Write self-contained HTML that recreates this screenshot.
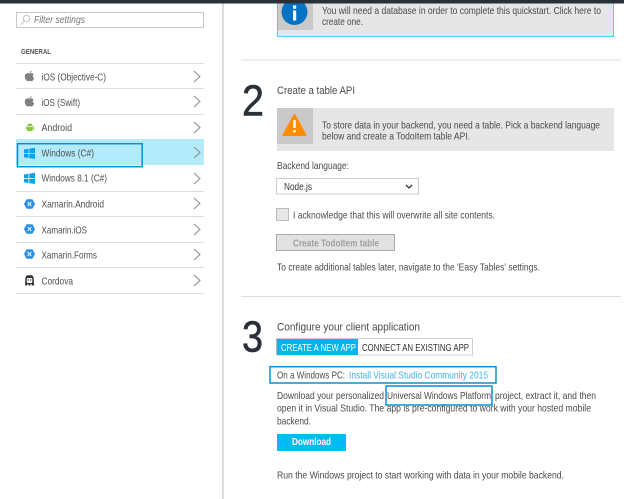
<!DOCTYPE html>
<html><head><meta charset="utf-8"><style>
html,body{margin:0;padding:0;background:#fff;width:624px;height:499px;overflow:hidden}
svg{display:block}
text{font-family:"Liberation Sans",sans-serif;font-size:10.5px;fill:#4a4a4a;filter:blur(.3px)}
.r{font-size:10.5px;fill:#4f4f4f}
</style></head><body>
<svg width="624" height="499" viewBox="0 0 624 499" xmlns="http://www.w3.org/2000/svg">
<rect x="222" y="0" width="2" height="499" fill="#dcdcdc"/>
<!-- filter -->
<rect x="16.5" y="12.500" width="187" height="15" fill="#fff" stroke="#c8c8c8"/>
<circle cx="26.500" cy="18.500" r="3.200" fill="none" stroke="#c4c4c4"/><path d="M24.300 21L21 24.500" stroke="#c4c4c4"/>
<text x="34" y="23" textLength="51" lengthAdjust="spacingAndGlyphs" font-style="italic" style="fill:#777">Filter settings</text>
<text x="21" y="54" textLength="30" lengthAdjust="spacingAndGlyphs" font-weight="bold" style="font-size:7.500px;fill:#555">GENERAL</text>
<!-- rows -->
<rect x="16" y="139" width="188" height="26" fill="#b4ebfa"/>
<g stroke="#dedede" stroke-width="1">
<path d="M16 63.500H204M16 88.500H204M16 114.500H204M16 191.500H204M16 216.500H204M16 242.500H204M16 293.500H204"/>
<path d="M16 267.500H204"/>
</g>
<g fill="none" stroke="#8a8a8a" stroke-width="1">
<path d="M194 71l6 5.500-6 5.500M194 96l6 5.500-6 5.500M194 122l6 5.500-6 5.500M194 147l6 5.500-6 5.500M194 173l6 5.500-6 5.500M194 198l6 5.500-6 5.500M194 224l6 5.500-6 5.500M194 249l6 5.500-6 5.500M194 275l6 5.500-6 5.500"/>
</g>
<text class="r" x="41.500" y="80.500" textLength="64.500" lengthAdjust="spacingAndGlyphs">iOS (Objective-C)</text>
<text class="r" x="41.500" y="106" textLength="38.500" lengthAdjust="spacingAndGlyphs">iOS (Swift)</text>
<text class="r" x="41.500" y="131" textLength="30.500" lengthAdjust="spacingAndGlyphs">Android</text>
<text class="r" x="41.500" y="156.500" textLength="52.500" lengthAdjust="spacingAndGlyphs">Windows (C#)</text>
<text class="r" x="41.500" y="181.500" textLength="65.500" lengthAdjust="spacingAndGlyphs">Windows 8.1 (C#)</text>
<text class="r" x="41.500" y="207.500" textLength="62.500" lengthAdjust="spacingAndGlyphs">Xamarin.Android</text>
<text class="r" x="41.500" y="233.500" textLength="45.500" lengthAdjust="spacingAndGlyphs">Xamarin.iOS</text>
<text class="r" x="41.500" y="258.500" textLength="55.500" lengthAdjust="spacingAndGlyphs">Xamarin.Forms</text>
<text class="r" x="41.500" y="284.500" textLength="31.500" lengthAdjust="spacingAndGlyphs">Cordova</text>
<!-- apple -->
<g fill="#808080">
<path d="M29.800 73.500c1.500-.6 3-.4 4 .8-1.500 1-1.300 3 .4 3.700-.6 1.700-1.600 3.200-2.600 3.200-.8 0-1.100-.4-1.800-.4s-1 .4-1.800.4c-1.800 0-3.200-2.800-3.200-4.800 0-2.800 2.600-3.900 5-2.900zM29.600 73c0-1.200 1-2 2-2.100 0 1.200-1 2.100-2 2.100z"/>
<path d="M29.800 98.800c1.500-.6 3-.4 4 .8-1.500 1-1.300 3 .4 3.700-.6 1.700-1.600 3.200-2.600 3.200-.8 0-1.100-.4-1.800-.4s-1 .4-1.800.4c-1.800 0-3.200-2.800-3.200-4.800 0-2.800 2.600-3.900 5-2.900zM29.600 98.300c0-1.200 1-2 2-2.100 0 1.200-1 2.100-2 2.100z"/>
</g>
<!-- android -->
<g fill="#8cc63f"><path d="M27 126.300a2.900 2.900 0 0 1 5.800 0zM27 127h5.800v3.300a1 1 0 0 1-1 .8h-3.800a1 1 0 0 1-1-.8z"/><rect x="25.600" y="126.500" width="1" height="3"/><rect x="33.200" y="126.500" width="1" height="3"/></g>
<!-- windows -->
<g fill="#00a4ef">
<path d="M24 149.500l4.500-.7v4.200H24zM29.300 148.700l5.700-.9v5.200h-5.700zM24 153.800h4.500v4.200l-4.500-.7zM29.300 153.800H35v5.200l-5.700-.9z"/>
<path d="M24 174.500l4.500-.7v4.200H24zM29.300 173.700l5.700-.9v5.200h-5.700zM24 178.800h4.500v4.200l-4.500-.7zM29.300 178.800H35v5.200l-5.700-.9z"/>
</g>
<!-- xamarin -->
<g fill="#2e90e0" stroke="#2e90e0" stroke-width="1.500" stroke-linejoin="round">
<path d="M24.800 204l2.200-4h5l2.200 4-2.200 4h-5z"/>
<path d="M24.800 229l2.200-4h5l2.200 4-2.200 4h-5z"/>
<path d="M24.800 254l2.200-4h5l2.200 4-2.200 4h-5z"/>
</g>
<path d="M27.700 202l3.600 4M31.300 202l-3.600 4M27.700 227l3.600 4M31.300 227l-3.600 4M27.700 252l3.600 4M31.300 252l-3.600 4" stroke="#d8ecfb" stroke-width="1.300"/>
<!-- cordova -->
<path d="M27 275.300h5l1.600 1.700.5 8.500h-2.300l-.3-1.500h-1v1.500h-2v-1.500h-1l-.3 1.500H25l.5-8.500z" fill="#333"/>
<rect x="26.800" y="278" width="5.500" height="5" rx="1" fill="#fff"/>
<rect x="27.800" y="279.200" width="1" height="1.600" fill="#333"/><rect x="30.300" y="279.200" width="1" height="1.600" fill="#333"/>
<rect x="17.500" y="143.700" width="124.700" height="23" fill="none" stroke="#0a90d0" stroke-width="1.500"/>
<!-- info box -->
<rect x="277.500" y="3" width="336" height="33.500" fill="#e6e6e6" stroke="#4fcdf2"/>
<rect x="278" y="3" width="35" height="27" fill="#c9c9c9"/>
<circle cx="294.500" cy="12" r="13" fill="#0672c6"/>
<rect x="293" y="10.500" width="3.200" height="10" fill="#fff"/><rect x="293" y="5.500" width="3.200" height="3.200" fill="#fff"/>
<rect x="0" y="0" width="624" height="3.500" fill="#2b3036"/>
<text x="322" y="14" textLength="279" lengthAdjust="spacingAndGlyphs">You will need a database in order to complete this quickstart. Click here to</text>
<text x="322" y="25" textLength="41" lengthAdjust="spacingAndGlyphs">create one.</text>
<rect x="241" y="59" width="380" height="2" fill="#eee"/>
<!-- step 2 -->
<text x="242" y="115.500" textLength="22" lengthAdjust="spacingAndGlyphs" stroke="#2b3036" stroke-width=".6" style="font-size:44px;fill:#2b3036">2</text>
<text x="277" y="94" textLength="78" lengthAdjust="spacingAndGlyphs" style="font-size:11px">Create a table API</text>
<rect x="277" y="108" width="337" height="43" fill="#e6e6e6"/>
<rect x="277" y="108" width="36" height="36" fill="#c9c9c9"/>
<path d="M294.500 115l11 20h-22z" fill="#ff8c00" stroke="#ff8c00" stroke-width="2" stroke-linejoin="round"/>
<rect x="293.300" y="120" width="2.400" height="8" fill="#fff"/><rect x="293.300" y="130" width="2.400" height="2.500" fill="#fff"/>
<text x="322" y="128.500" textLength="278" lengthAdjust="spacingAndGlyphs">To store data in your backend, you need a table. Pick a backend language</text>
<text x="322" y="139.500" textLength="148" lengthAdjust="spacingAndGlyphs">below and create a TodoItem table API.</text>
<text x="277" y="169" textLength="72" lengthAdjust="spacingAndGlyphs">Backend language:</text>
<rect x="276.500" y="178.500" width="142" height="15.500" fill="#fff" stroke="#ccc"/>
<text x="284" y="190" textLength="28" lengthAdjust="spacingAndGlyphs" style="fill:#333">Node.js</text>
<path d="M406 185l3 3 3-3" fill="none" stroke="#333" stroke-width="1.300"/>
<rect x="276.500" y="208.500" width="12" height="12" fill="#e6e6e6" stroke="#bbb"/>
<text x="293" y="218.500" textLength="202" lengthAdjust="spacingAndGlyphs">I acknowledge that this will overwrite all site contents.</text>
<rect x="276.500" y="234.500" width="118" height="16" fill="#e2e2e2" stroke="#aaa"/>
<text x="293" y="246.500" textLength="86" lengthAdjust="spacingAndGlyphs" font-weight="bold" style="fill:#a0a0a0;font-size:10px">Create TodoItem table</text>
<text x="277" y="270.500" textLength="263" lengthAdjust="spacingAndGlyphs">To create additional tables later, navigate to the 'Easy Tables' settings.</text>
<rect x="241" y="296" width="380" height="1" fill="#ddd"/>
<!-- step 3 -->
<text x="242" y="351.500" textLength="21" lengthAdjust="spacingAndGlyphs" stroke="#2b3036" stroke-width=".6" style="font-size:44px;fill:#2b3036">3</text>
<text x="277" y="330.500" textLength="143" lengthAdjust="spacingAndGlyphs" style="font-size:11px">Configure your client application</text>
<rect x="276.500" y="338.500" width="196" height="16.500" fill="#fff" stroke="#d0d0d0"/>
<rect x="277" y="339" width="81" height="16" fill="#00b4f0"/>
<rect x="276.500" y="338.500" width="1" height="16.500" fill="#999"/>
<text x="281" y="351" textLength="75" lengthAdjust="spacingAndGlyphs" style="fill:#fff">CREATE A NEW APP</text>
<text x="362" y="351" textLength="107" lengthAdjust="spacingAndGlyphs" style="fill:#333">CONNECT AN EXISTING APP</text>
<text x="277" y="378.500" textLength="68" lengthAdjust="spacingAndGlyphs">On a Windows PC:</text>
<text x="349" y="378.500" textLength="139" lengthAdjust="spacingAndGlyphs" style="fill:#38b4ee">Install Visual Studio Community 2015</text>
<rect x="270" y="366.700" width="226" height="16.300" fill="none" stroke="#0a90d0" stroke-width="1.500"/>
<text x="277" y="399" textLength="107" lengthAdjust="spacingAndGlyphs">Download your personalized</text>
<text x="387" y="399" textLength="104" lengthAdjust="spacingAndGlyphs">Universal Windows Platform</text>
<text x="495" y="399" textLength="101" lengthAdjust="spacingAndGlyphs">project, extract it, and then</text>
<text x="277" y="411.500" textLength="314" lengthAdjust="spacingAndGlyphs">open it in Visual Studio. The app is pre-configured to work with your hosted mobile</text>
<text x="277" y="424.500" textLength="34" lengthAdjust="spacingAndGlyphs">backend.</text>
<rect x="386" y="386" width="106" height="19" fill="none" stroke="#0a90d0" stroke-width="1.500"/>
<rect x="277" y="434" width="69" height="17" fill="#00bcf2"/>
<text x="292" y="445" textLength="39" lengthAdjust="spacingAndGlyphs" font-weight="bold" style="fill:#fff">Download</text>
<text x="277" y="478.500" textLength="287" lengthAdjust="spacingAndGlyphs">Run the Windows project to start working with data in your mobile backend.</text>
</svg>
</body></html>
